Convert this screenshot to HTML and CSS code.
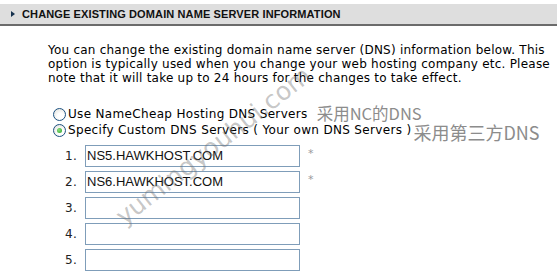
FILE: index.html
```html
<!DOCTYPE html>
<html lang="en">
<head>
    <meta charset="UTF-8">
    <title>Change DNS</title>
    <link rel="stylesheet" href="styles.css">
</head>
<body>
    <div class="dns-panel">
        <div class="panel-header">
            <span class="arrow"></span>
            <h1>CHANGE EXISTING DOMAIN NAME SERVER INFORMATION</h1>
        </div>

        <div class="panel-content">
            <p class="intro">You can change the existing domain name server (DNS) information below. This option is typically used when you change your web hosting company etc. Please note that it will take up to 24 hours for the changes to take effect.</p>

            <div class="choices">
                <label class="choice">
                    <span class="radio"></span>
                    <span class="choice-text">Use NameCheap Hosting DNS Servers</span>
                    <span class="note note-small">采用NC的DNS</span>
                </label>
                <label class="choice">
                    <span class="radio checked"></span>
                    <span class="choice-text">Specify Custom DNS Servers ( Your own DNS Servers )</span>
                    <span class="note note-large">采用第三方DNS</span>
                </label>
            </div>

            <div class="server-list">
                <div class="server-row">
                    <span class="num">1.</span>
                    <div class="field">NS5.HAWKHOST.COM</div>
                    <span class="req">*</span>
                </div>
                <div class="server-row">
                    <span class="num">2.</span>
                    <div class="field">NS6.HAWKHOST.COM</div>
                    <span class="req">*</span>
                </div>
                <div class="server-row">
                    <span class="num">3.</span>
                    <div class="field"></div>
                </div>
                <div class="server-row">
                    <span class="num">4.</span>
                    <div class="field"></div>
                </div>
                <div class="server-row">
                    <span class="num">5.</span>
                    <div class="field"></div>
                </div>
            </div>
        </div>

        <div class="watermark">yumingyouhui.com</div>
    </div>
</body>
</html>
```

FILE: styles.css
```css
* {
    margin: 0;
    padding: 0;
    box-sizing: border-box;
}

body {
    background-color: #fff;
    font-family: "DejaVu Sans", Verdana, sans-serif;
    color: #000;
    width: 557px;
    height: 274px;
    overflow: hidden;
}

.dns-panel {
    position: relative;
    padding-top: 4px;
}

.panel-header {
    display: flex;
    align-items: center;
    height: 22px;
    background-color: #dedede;
    border-bottom: 2px solid #6b6b6b;
    padding-left: 11px;
}

.arrow {
    width: 0;
    height: 0;
    border-top: 3px solid transparent;
    border-bottom: 3px solid transparent;
    border-left: 4px solid #16324e;
    margin-right: 7px;
}

.panel-header h1 {
    font-family: "Liberation Sans", Arial, sans-serif;
    font-size: 11px;
    font-weight: bold;
    color: #111;
    letter-spacing: 0.12px;
}

.panel-content {
    padding: 17px 0 0 48px;
}

.intro {
    font-size: 12px;
    line-height: 14px;
    width: 505px;
    letter-spacing: 0.23px;
}

.choices {
    margin-top: 21px;
    margin-left: 5px;
    display: flex;
    flex-direction: column;
}

.choice {
    display: flex;
    align-items: center;
    height: 16px;
    font-size: 12px;
    letter-spacing: 0.33px;
}

.radio {
    width: 13px;
    height: 13px;
    border-radius: 50%;
    border: 1px solid #1c5180;
    background: radial-gradient(circle at 60% 65%, #ffffff 30%, #dcdcd5 100%);
    margin-right: 2px;
    position: relative;
}

.radio.checked::after {
    content: "";
    position: absolute;
    left: 3px;
    top: 3px;
    width: 5px;
    height: 5px;
    border-radius: 50%;
    background: radial-gradient(circle at 40% 40%, #8fe07f, #21a121);
}

.note {
    font-family: "Noto Sans CJK SC", sans-serif;
    color: #8c8c8c;
    letter-spacing: 0;
    line-height: 14px;
}

.note-small {
    font-size: 16.5px;
    margin-left: 9px;
    margin-bottom: 3px;
}

.note-large {
    font-size: 18px;
    margin-left: 2px;
    margin-top: 4px;
}

.server-list {
    margin-top: 7px;
    margin-left: 17px;
    display: flex;
    flex-direction: column;
    gap: 4px;
}

.server-row {
    display: flex;
    align-items: center;
    height: 22px;
}

.num {
    width: 20px;
    font-size: 12px;
    letter-spacing: 0.3px;
    color: #222;
}

.field {
    width: 215px;
    height: 22px;
    border: 1px solid #7f9db9;
    font-family: "Liberation Sans", Arial, sans-serif;
    font-size: 13px;
    line-height: 20px;
    padding-left: 1px;
    color: #111;
}

.req {
    margin-left: 8px;
    margin-top: -6px;
    font-size: 11px;
    color: #999;
}

.watermark {
    position: absolute;
    left: 110px;
    top: 208px;
    font-family: "DejaVu Sans", sans-serif;
    font-size: 25px;
    line-height: 30px;
    color: rgba(110, 110, 110, 0.4);
    transform: rotate(-38deg);
    transform-origin: left top;
    white-space: nowrap;
    pointer-events: none;
}
```
